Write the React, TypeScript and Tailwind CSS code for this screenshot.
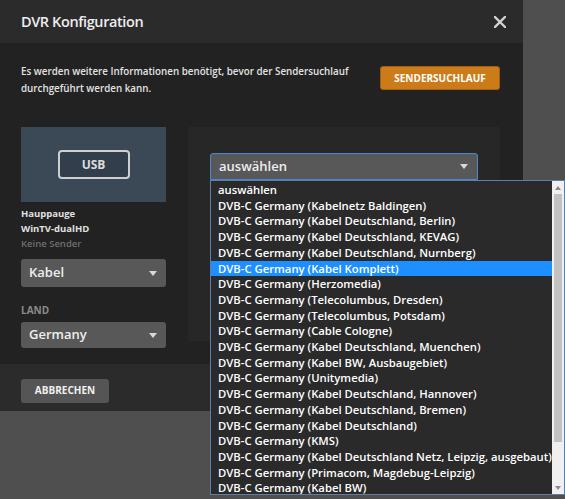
import React from 'react';

// ─── Data ─────────────────────────────────────────────────────────────────────

const PROVIDERS = [
  'auswählen',
  'DVB-C Germany (Kabelnetz Baldingen)',
  'DVB-C Germany (Kabel Deutschland, Berlin)',
  'DVB-C Germany (Kabel Deutschland, KEVAG)',
  'DVB-C Germany (Kabel Deutschland, Nurnberg)',
  'DVB-C Germany (Kabel Komplett)',
  'DVB-C Germany (Herzomedia)',
  'DVB-C Germany (Telecolumbus, Dresden)',
  'DVB-C Germany (Telecolumbus, Potsdam)',
  'DVB-C Germany (Cable Cologne)',
  'DVB-C Germany (Kabel Deutschland, Muenchen)',
  'DVB-C Germany (Kabel BW, Ausbaugebiet)',
  'DVB-C Germany (Unitymedia)',
  'DVB-C Germany (Kabel Deutschland, Hannover)',
  'DVB-C Germany (Kabel Deutschland, Bremen)',
  'DVB-C Germany (Kabel Deutschland)',
  'DVB-C Germany (KMS)',
  'DVB-C Germany (Kabel Deutschland Netz, Leipzig, ausgebaut)',
  'DVB-C Germany (Primacom, Magdebug-Leipzig)',
  'DVB-C Germany (Kabel BW)',
];

const SELECTED = 5;

// ─── Small pieces ─────────────────────────────────────────────────────────────

const Caret: React.FC = () => (
  <svg width="8" height="5" viewBox="0 0 8 5" className="shrink-0">
    <path d="M0 0 H8 L4 5 Z" fill="#d8d8d8" />
  </svg>
);

const CloseIcon: React.FC = () => (
  <svg width="12" height="12" viewBox="0 0 12 12">
    <path d="M1 1 L11 11 M11 1 L1 11" stroke="#d2d2d2" strokeWidth="2.4" strokeLinecap="square" />
  </svg>
);

const FakeSelect: React.FC<{ label: string; className?: string }> = ({ label, className = '' }) => (
  <div
    className={`flex items-center justify-between rounded-[3px] bg-[#585858] pl-[8px] pr-[9px] text-[13px] font-semibold text-[#eeeeee] ${className}`}
  >
    <span>{label}</span>
    <Caret />
  </div>
);

/** The open native option list hanging under the provider select */
const OptionList: React.FC = () => (
  <div className="absolute left-0 top-full z-10 flex h-[315px] w-[355px] border border-[#5f7ea6] bg-[#2a2a2a]">
    <ul className="min-w-0 flex-1 overflow-hidden pt-[1px] text-[11.3px] font-semibold leading-[15.7px] text-white">
      {PROVIDERS.map((p, i) => (
        <li
          key={p}
          className={`whitespace-nowrap pl-[7px] ${i === SELECTED ? 'bg-[#1e8fff]' : ''}`}
        >
          {p}
        </li>
      ))}
    </ul>
    {/* scrollbar */}
    <div className="flex w-[12px] shrink-0 flex-col items-center bg-[#f0f0f0]">
      <div className="flex h-[13px] items-center justify-center">
        <svg width="6" height="4" viewBox="0 0 6 4">
          <path d="M0 4 L3 0 L6 4 Z" fill="#8a8a8a" />
        </svg>
      </div>
      <div className="h-[248px] w-[8px] bg-[#c2c2c2]" />
      <div className="flex-1" />
      <div className="flex h-[13px] items-center justify-center">
        <svg width="6" height="4" viewBox="0 0 6 4">
          <path d="M0 0 H6 L3 4 Z" fill="#8a8a8a" />
        </svg>
      </div>
    </div>
  </div>
);

// ─── Page ─────────────────────────────────────────────────────────────────────

export default function App() {
  return (
    <div
      className="h-[499px] w-[565px] overflow-hidden bg-[#4f4f4f]"
      style={{ fontFamily: '"Open Sans", "Liberation Sans", sans-serif' }}
    >
      <div className="w-[523px]">
        {/* header */}
        <div className="flex h-[43px] items-center justify-between bg-[#2b2b2b] pl-[21px] pr-[17px]">
          <h1 className="text-[14.5px] font-semibold tracking-[-0.4px] text-[#eeeeee]">DVR Konfiguration</h1>
          <CloseIcon />
        </div>

        {/* body */}
        <div className="bg-[#222222] pl-[21px] pr-[23px] pb-[16px] pt-[20px]">
          <div className="flex items-start justify-between">
            <p className="text-[9.8px] font-semibold leading-[17px] text-[#e2e2e2]">
              Es werden weitere Informationen benötigt, bevor der Sendersuchlauf
              <br />
              durchgeführt werden kann.
            </p>
            <button className="mt-[3px] h-[24px] w-[120px] rounded-[3px] border border-[#a25f10] bg-[#cc7b19] text-[10px] font-bold text-white">
              SENDERSUCHLAUF
            </button>
          </div>

          <div className="mt-[30px] flex items-start gap-[22px]">
            {/* device column */}
            <div className="flex w-[145px] flex-col">
              <div className="flex h-[75px] items-center justify-center bg-[#3b4856]">
                <div className="flex h-[29px] w-[72px] items-center justify-center rounded-[4px] border-2 border-[#cfcfcf] bg-[#323e4b] text-[12px] font-bold text-[#dcdcdc]">
                  USB
                </div>
              </div>
              <div className="mt-[4px] text-[9.5px] font-bold leading-[15px]">
                <div className="text-[#e0e0e0]">Hauppauge</div>
                <div className="text-[#e0e0e0]">WinTV-dualHD</div>
                <div className="font-semibold text-[#6f6f6f]">Keine Sender</div>
              </div>
              <FakeSelect label="Kabel" className="mt-[8px] h-[28px]" />
              <div className="mt-[16px] text-[10px] font-bold leading-[14px] text-[#8a8a8a]">LAND</div>
              <FakeSelect label="Germany" className="mt-[5px] h-[26px]" />
            </div>

            {/* provider panel */}
            <div className="h-[214px] flex-1 bg-[#272727] px-[22px] pt-[26px]">
              <div className="relative">
                <FakeSelect
                  label="auswählen"
                  className="h-[27px] rounded-b-none border border-[#4d86d0] bg-[#5a5a5a]"
                />
                <OptionList />
              </div>
            </div>
          </div>
        </div>

        {/* footer */}
        <div className="h-[47px] bg-[#2b2b2b] pl-[21px] pt-[12px]">
          <button className="h-[24px] w-[88px] rounded-[3px] bg-[#555555] text-[10px] font-bold text-[#f0f0f0]">
            ABBRECHEN
          </button>
        </div>
      </div>
    </div>
  );
}
